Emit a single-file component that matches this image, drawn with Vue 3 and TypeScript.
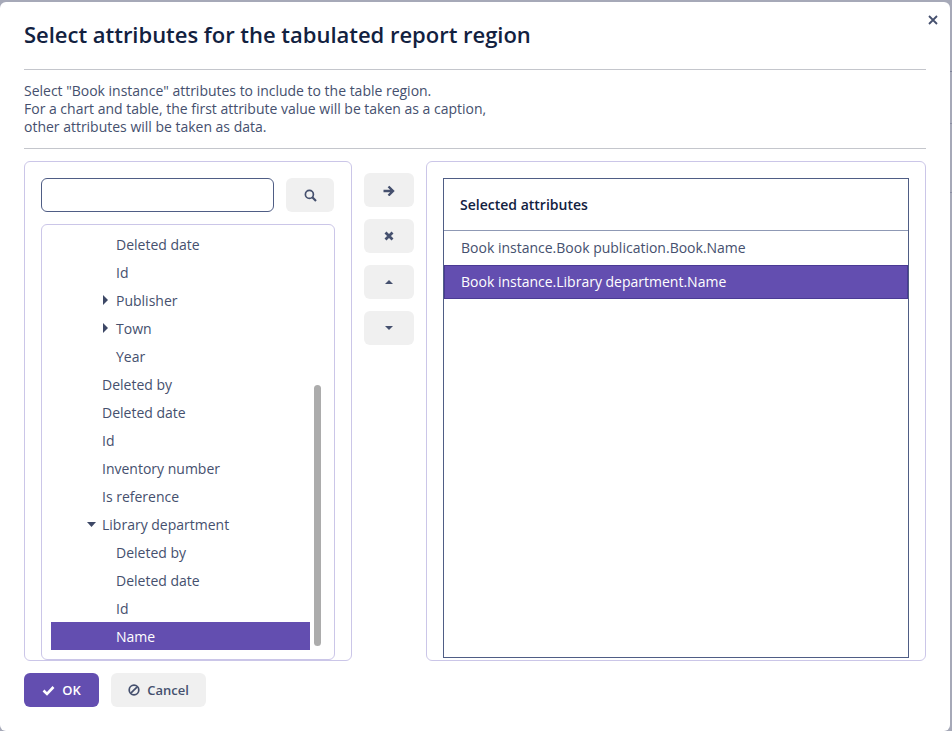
<script setup lang="ts">
interface TreeRow { label: string; level: number; arrow?: 'right' | 'down'; selected?: boolean }

const rows: TreeRow[] = [
  { label: 'Deleted date', level: 2 },
  { label: 'Id', level: 2 },
  { label: 'Publisher', level: 2, arrow: 'right' },
  { label: 'Town', level: 2, arrow: 'right' },
  { label: 'Year', level: 2 },
  { label: 'Deleted by', level: 1 },
  { label: 'Deleted date', level: 1 },
  { label: 'Id', level: 1 },
  { label: 'Inventory number', level: 1 },
  { label: 'Is reference', level: 1 },
  { label: 'Library department', level: 1, arrow: 'down' },
  { label: 'Deleted by', level: 2 },
  { label: 'Deleted date', level: 2 },
  { label: 'Id', level: 2 },
  { label: 'Name', level: 2, selected: true },
]

const selected: string[] = ['Book instance.Book publication.Book.Name', 'Book instance.Library department.Name']
</script>

<template>
  <div class="backdrop">
    <div class="dialog">
      <button class="close" aria-label="Close">
        <svg width="10" height="10" viewBox="0 0 10 10"><path d="M1 1l8 8M9 1l-8 8" stroke="#45506e" stroke-width="1.8" fill="none" /></svg>
      </button>
      <h1 class="title">Select attributes for the tabulated report region</h1>
      <div class="intro">
        Select "Book instance" attributes to include to the table region.<br />
        For a chart and table, the first attribute value will be taken as a caption,<br />
        other attributes will be taken as data.
      </div>
      <div class="columns">
        <div class="panel left">
          <div class="search">
            <input class="search-input" type="text" />
            <button class="btn search-btn" aria-label="Search">
              <svg width="13" height="13" viewBox="0 0 13 13"><circle cx="5.4" cy="5.4" r="4" stroke="#45506e" stroke-width="1.7" fill="none" /><path d="M8.3 8.3l3.7 3.7" stroke="#45506e" stroke-width="2.2" fill="none" /></svg>
            </button>
          </div>
          <div class="tree">
            <div v-for="(r, i) in rows" :key="i" class="row" :class="['level' + r.level, { selected: r.selected }]">
              <svg v-if="r.arrow === 'right'" class="arrow" width="5" height="10" viewBox="0 0 5 10"><path d="M0 0l5 5-5 5z" fill="#3d4866" /></svg>
              <svg v-if="r.arrow === 'down'" class="arrow" width="9" height="5" viewBox="0 0 9 5"><path d="M0 0h9L4.500 5z" fill="#3d4866" /></svg>
              <span>{{ r.label }}</span>
            </div>
            <div class="scrollbar"></div>
          </div>
        </div>
        <div class="actions">
          <button class="btn action" aria-label="Add">
            <svg width="12" height="12" viewBox="0 -1 12 12"><path d="M0.500 6h9M5.500 1.500L10 6l-4.500 4.500" stroke="#45506e" stroke-width="2.400" fill="none" /></svg>
          </button>
          <button class="btn action" aria-label="Remove">
            <svg width="10" height="10" viewBox="0 0 10 10"><path d="M1.500 1.500l7 7M8.500 1.500l-7 7" stroke="#45506e" stroke-width="2.800" fill="none" /></svg>
          </button>
          <button class="btn action" aria-label="Up">
            <svg width="8" height="4" viewBox="0 0 8 4"><path d="M0 4h8L4 0z" fill="#45506e" /></svg>
          </button>
          <button class="btn action" aria-label="Down">
            <svg width="8" height="4" viewBox="0 0 8 4"><path d="M0 0h8L4 4z" fill="#45506e" /></svg>
          </button>
        </div>
        <div class="panel right">
          <div class="table">
            <div class="table-head">Selected attributes</div>
            <div v-for="(s, i) in selected" :key="s" class="table-row" :class="{ active: i === 1 }">{{ s }}</div>
          </div>
        </div>
      </div>
      <div class="footer">
        <button class="btn primary">
          <svg width="13" height="11" viewBox="0 0 13 11"><path d="M1.500 5.500l3.500 3.500 6.500-7" stroke="#fff" stroke-width="2.600" fill="none" /></svg>
          OK
        </button>
        <button class="btn cancel">
          <svg width="12" height="12" viewBox="0 0 12 12"><circle cx="6" cy="6" r="4.800" stroke="#45506e" stroke-width="1.700" fill="none" /><path d="M2.800 9.200l6.400-6.400" stroke="#45506e" stroke-width="1.700" fill="none" /></svg>
          Cancel
        </button>
      </div>
    </div>
  </div>
</template>

<style>
html, body { margin: 0; padding: 0; }
</style>

<style scoped>
.backdrop {
  width: 952px;
  height: 731px;
  overflow: hidden;
  /* page rows behind the dialog show as ticks in the strip on the right */
  background:
    linear-gradient(#7d8299, #7d8299) 0 71px / 100% 1px no-repeat,
    linear-gradient(#8a8ea3, #8a8ea3) 0 123px / 100% 1px no-repeat,
    linear-gradient(#8a8ea3, #8a8ea3) 0 192px / 100% 1px no-repeat,
    #a6a9b8;
  padding-top: 2px;
  box-sizing: border-box;
  font-family: "Open Sans", sans-serif;
  font-size: 14px;
  color: #45506e;
}
.dialog {
  position: relative;
  width: 950px;
  height: 729px;
  box-sizing: border-box;
  padding: 0 24px;
  background: #fff;
  border-radius: 6px;
}
.close {
  position: absolute;
  top: 13px;
  right: 12px;
  width: 10px;
  height: 10px;
  padding: 0;
  border: 0;
  background: none;
  display: flex;
}
.title {
  margin: 0;
  height: 68px;
  padding-top: 16px;
  box-sizing: border-box;
  font-size: 22px;
  line-height: 33px;
  font-weight: 600;
  letter-spacing: -0.02px;
  color: #12213f;
  border-bottom: 1px solid #c4c6cc;
}
.intro {
  height: 79px;
  box-sizing: border-box;
  padding-top: 12px;
  line-height: 18px;
  letter-spacing: -0.01px;
  border-bottom: 1px solid #c4c6cc;
}
.columns {
  display: flex;
  margin-top: 12px;
  height: 500px;
}
.panel {
  box-sizing: border-box;
  border: 1px solid #cbc6e8;
  border-radius: 6px;
}
.left {
  width: 328px;
  padding: 16px 16px 0;
}
.search {
  display: flex;
  gap: 12px;
}
.search-input {
  width: 233px;
  height: 34px;
  box-sizing: border-box;
  border: 1px solid #4f5d85;
  border-radius: 6px;
  outline: none;
  background: #fff;
}
.btn {
  display: flex;
  align-items: center;
  justify-content: center;
  height: 34px;
  padding: 0;
  border: 0;
  border-radius: 6px;
  background: #f0f0f0;
  font-family: inherit;
  font-size: 13px;
  font-weight: 600;
  color: #45506e;
}
.search-btn {
  width: 48px;
}
.tree {
  position: relative;
  width: 294px;
  height: 436px;
  margin-top: 12px;
  box-sizing: border-box;
  padding: 5px 0 0 9px;
  overflow: hidden;
  border: 1px solid #cbc6e8;
  border-radius: 6px;
}
.row {
  position: relative;
  width: 259px;
  height: 28px;
  line-height: 30px;
  box-sizing: border-box;
}
.row.level1 { padding-left: 51px; }
.row.level2 { padding-left: 65px; }
.row.selected {
  background: #634eb0;
  color: #fff;
}
.arrow {
  position: absolute;
  top: 9px;
}
.level2 .arrow { left: 52px; }
.level1 .arrow {
  left: 36px;
  top: 12px;
}
.scrollbar {
  position: absolute;
  left: 272px;
  top: 160px;
  width: 7px;
  height: 261px;
  border-radius: 4px;
  background: #acacac;
}
.actions {
  width: 74px;
  display: flex;
  flex-direction: column;
  align-items: center;
  gap: 12px;
  padding-top: 12px;
  box-sizing: border-box;
}
.action {
  width: 50px;
}
.right {
  width: 500px;
  padding: 16px 16px 2px;
}
.table {
  height: 100%;
  box-sizing: border-box;
  border: 1px solid #4f5d85;
}
.table-head {
  height: 52px;
  box-sizing: border-box;
  line-height: 51px;
  padding-left: 16px;
  font-weight: 600;
  color: #12213f;
  border-bottom: 1px solid #8f99b5;
}
.table-row {
  height: 34px;
  line-height: 33px;
  padding-left: 17px;
}
.table-row.active {
  box-sizing: border-box;
  line-height: 31px;
  padding-left: 16px;
  background: #634eb0;
  color: #fff;
  border: 1px solid #4a3a94;
}
.footer {
  display: flex;
  gap: 12px;
  margin-top: 12px;
}
.primary {
  width: 75px;
  gap: 7px;
  background: #634eb0;
  color: #fff;
}
.cancel {
  width: 95px;
  gap: 7px;
}
</style>
